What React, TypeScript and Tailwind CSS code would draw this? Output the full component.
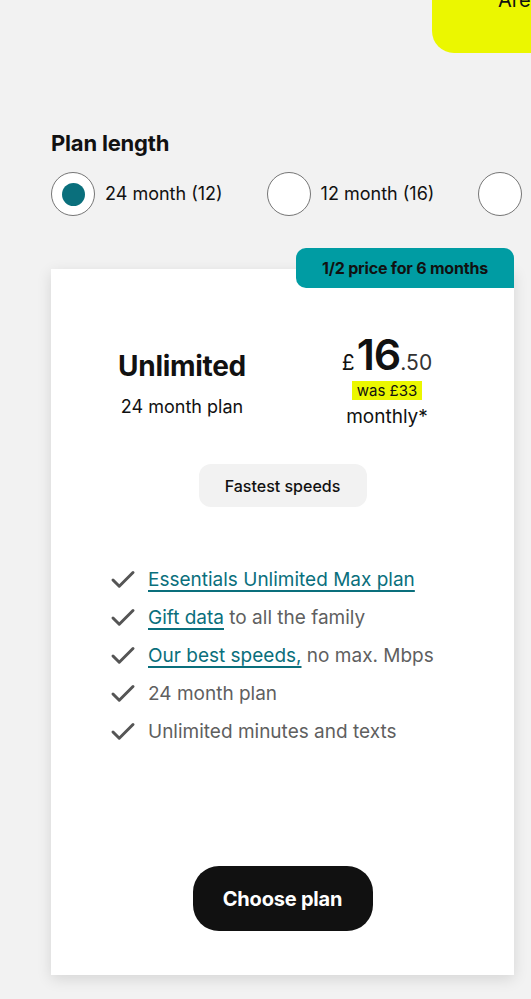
import { Check } from 'lucide-react';

const features = [
  { link: 'Essentials Unlimited Max plan', rest: '' },
  { link: 'Gift data', rest: ' to all the family' },
  { link: 'Our best speeds,', rest: ' no max. Mbps' },
  { link: '', rest: '24 month plan' },
  { link: '', rest: 'Unlimited minutes and texts' },
];

const options = [
  { label: '24 month (12)', selected: true },
  { label: '12 month (16)', selected: false },
  { label: '1 month (4)', selected: false },
];

export default function App() {
  return (
    <div
      className="relative w-[531px] h-[999px] overflow-hidden bg-[#f2f2f2] text-[#111]"
      style={{ fontFamily: 'Inter, "Noto Sans", sans-serif' }}
    >
      {/* Yellow banner peeking in from the top */}
      <div className="flex justify-end">
        <div className="-mt-[20px] ml-auto w-[99px] h-[73px] rounded-bl-[22px] bg-[#ebf700] pl-[66px] pt-[10px] text-[20px] leading-none whitespace-nowrap">
          Are
        </div>
      </div>

      <div className="pl-[51px]">
        {/* Plan length */}
        <h2 className="mt-[76px] text-[22px] font-bold leading-[28px] tracking-[-0.2px]">Plan length</h2>

        <div className="mt-[15px] flex items-center whitespace-nowrap">
          {options.map((o) => (
            <label key={o.label} className="flex items-center mr-[44px]">
              <span className="flex h-[44px] w-[44px] shrink-0 items-center justify-center rounded-full border border-[#767676] bg-white">
                {o.selected && <span className="h-[23px] w-[23px] rounded-full bg-[#0a6f7c]" />}
              </span>
              <span className="ml-[10px] text-[18px] leading-none">{o.label}</span>
            </label>
          ))}
        </div>

        {/* Plan card */}
        <div className="relative mt-[53px] w-[463px] h-[706px] bg-white shadow-[0_4px_14px_rgba(0,0,0,0.12)]">
          <div className="absolute -top-[21px] right-0 flex h-[40px] w-[218px] items-center justify-center rounded-t-[10px] rounded-bl-[10px] bg-[#009ca3] text-[16px] font-bold tracking-[-0.2px]">
            1/2 price for 6 months
          </div>

          <div className="flex items-center pt-[64px]">
            <div className="w-[262px] pt-[6px] text-center">
              <div className="text-[28px] font-bold leading-[34px] tracking-[-0.3px]">Unlimited</div>
              <div className="mt-[12px] text-[18px] leading-[24px]">24 month plan</div>
            </div>
            <div className="w-[148px] flex flex-col items-center">
              <div className="flex items-baseline leading-none">
                <span className="text-[21px] mr-[2px]">£</span>
                <span className="text-[43px] font-semibold tracking-[-1px]">16</span>
                <span className="text-[21px] text-[#333]">.50</span>
              </div>
              <span className="mt-[5px] bg-[#ebf700] px-[5px] text-[15px] leading-[19px]">was £33</span>
              <span className="mt-[5px] text-[19px] leading-[24px]">monthly*</span>
            </div>
          </div>

          <div className="mt-[35px] flex justify-center">
            <div className="flex h-[43px] w-[168px] items-center justify-center rounded-[12px] bg-[#f2f2f2] text-[16px] font-medium">
              Fastest speeds
            </div>
          </div>

          <ul className="mt-[60px] pl-[57px] flex flex-col gap-[12px]">
            {features.map((f, i) => (
              <li key={i} className="flex items-center h-[26px] text-[19px] leading-[26px] text-[#5f5f5f] whitespace-nowrap">
                <Check className="mr-[10px] h-[30px] w-[30px] shrink-0 text-[#555]" strokeWidth={2.4} />
                <span>
                  {f.link && (
                    <span className="text-[#0a6f7c] underline decoration-[1.5px] underline-offset-[4px]">{f.link}</span>
                  )}
                  {f.rest}
                </span>
              </li>
            ))}
          </ul>

          <div className="mt-[121px] flex justify-center">
            <button className="h-[65px] w-[180px] rounded-[26px] bg-[#111] text-[20px] font-bold text-white tracking-[-0.2px]">
              Choose plan
            </button>
          </div>
        </div>
      </div>
    </div>
  );
}
